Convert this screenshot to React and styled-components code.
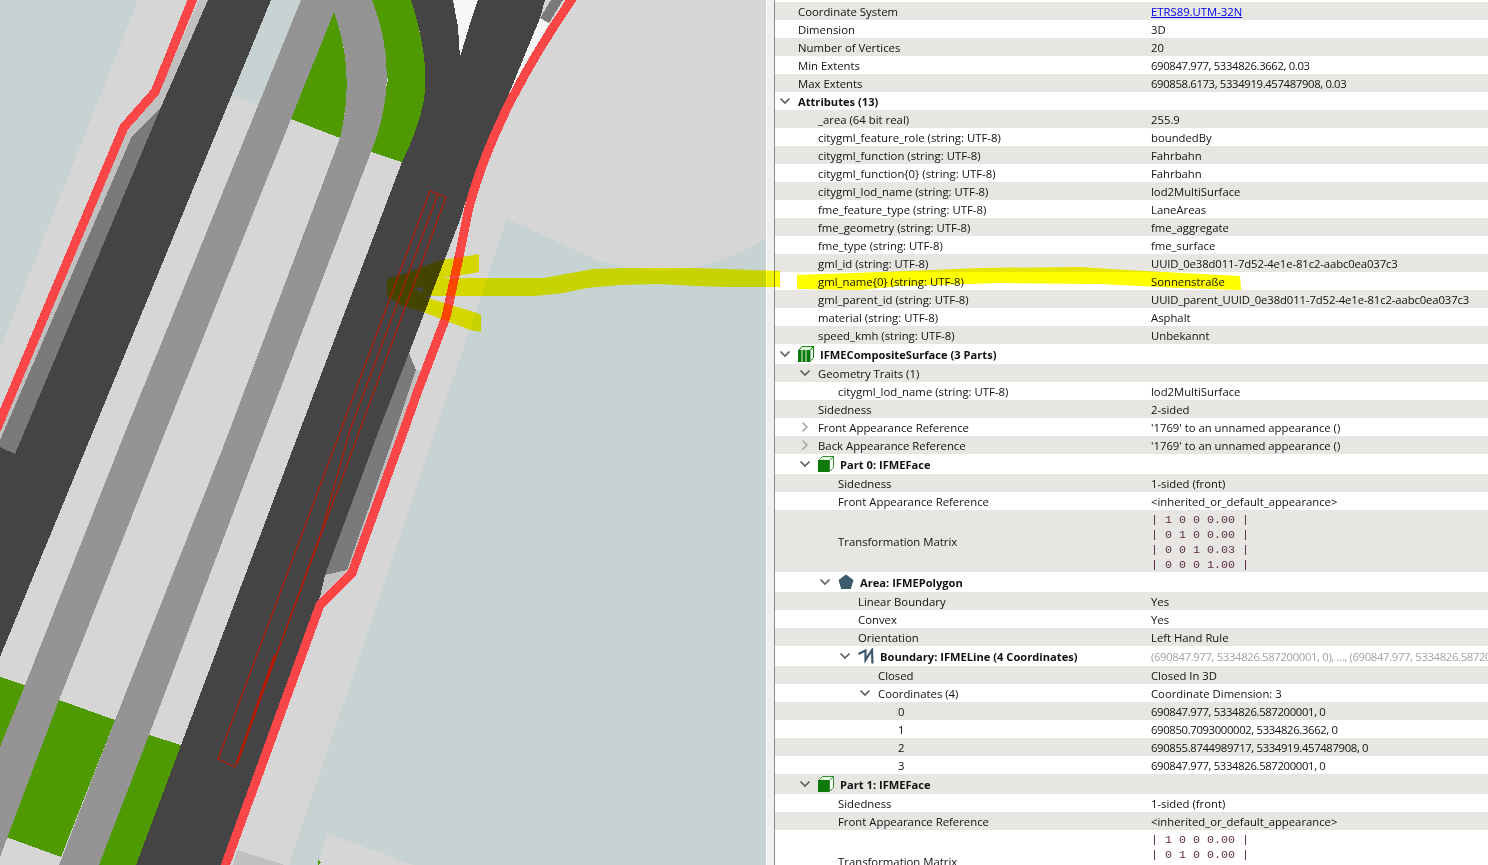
import React from 'react';
import styled, { createGlobalStyle } from 'styled-components';

const GlobalStyle = createGlobalStyle`
    html, body {
        margin: 0;
        padding: 0;
        height: 100%;
        overflow: hidden;
        background: #fff;
    }
`;

const Page = styled.div`
    position: relative;
    display: flex;
    width: 1488px;
    height: 865px;
    overflow: hidden;
`;

const MapPane = styled.div`
    flex: none;
    width: 766px;
    height: 865px;
    background: #d6d6d6;
`;

const MapSvg = styled.svg`
    display: block;
`;

const Splitter = styled.div`
    flex: none;
    width: 7px;
    background: #f0f0f0;
    border-left: 1px solid #fff;
`;

const TreePanel = styled.div`
    flex: 1;
    min-width: 0;
    padding-top: 2px;
    border-left: 1px solid #8a8a96;
    background: #fff;
    font-family: "Open Sans", "Noto Sans", sans-serif;
    font-size: 11.35px;
    color: #111;
`;

const Row = styled.div`
    display: grid;
    grid-template-columns: 376px 1fr;
    align-items: center;
    height: ${(p) => (p.$matrix ? 62 : p.$icon ? 20 : 18)}px;
    background: #fff;
    white-space: nowrap;

    &:nth-child(odd) {
        background: #e7e6e2;
    }
`;

const NameCell = styled.div`
    display: flex;
    align-items: center;
    min-width: 0;
    padding-left: ${(p) => p.$level * 20}px;
    font-weight: ${(p) => (p.$bold ? 700 : 400)};
    font-size: ${(p) => (p.$bold ? '11.15px' : 'inherit')};
`;

const Twisty = styled.span`
    flex: none;
    display: flex;
    align-items: center;
    justify-content: center;
    width: 20px;
    height: 16px;
`;

const NodeIcon = styled.span`
    flex: none;
    display: flex;
    width: 16px;
    height: 16px;
    margin-left: 3px;
    margin-right: 3px;
`;

const NameText = styled.span`
    padding-left: 3px;
`;

const ValueCell = styled.div`
    min-width: 0;
    overflow: hidden;
    font-size: 11.3px;
    letter-spacing: ${(p) => p.$spacing}px;
    color: ${(p) => (p.$muted ? '#a3a3a3' : 'inherit')};
`;

const Link = styled.a`
    color: #0000ee;
    text-decoration: underline;
`;

const Matrix = styled.div`
    padding-top: 4px;
    font-family: "Liberation Mono", monospace;
    font-size: 11.67px;
    line-height: 15px;
    letter-spacing: 0;
    color: #5d2b46;
    white-space: pre;
`;

const HighlightOverlay = styled.svg`
    position: absolute;
    left: 0;
    top: 0;
    pointer-events: none;
    mix-blend-mode: multiply;
`;

const Chevron = ({ open }) => (
    <svg width="12" height="12" viewBox="0 0 12 12">
        <polyline
            points={open ? '1.5,3.5 6,8 10.5,3.5' : '3.5,1.5 8,6 3.5,10.5'}
            fill="none"
            stroke={open ? '#5f5f5f' : '#a8a8a8'}
            strokeWidth="1.7"
        />
    </svg>
);

const CompositeIcon = () => (
    <svg width="16" height="16" viewBox="0 0 16 16">
        <path d="M0.5 4.5 L4 0.5 H15.5 L12 4.5 Z" fill="#dcefd8" stroke="#0b7a0b" />
        <path d="M12 4.5 L15.5 0.5 V11.5 L12 15.5 Z" fill="#fff" stroke="#0b7a0b" />
        <rect x="0" y="4" width="12" height="12" fill="#0b7a0b" />
        <path d="M4 4V16M8 4V16M4.5 4L8 0.5M8.5 4L12 0.5" stroke="#e4f3e0" strokeWidth="1" />
    </svg>
);

const FaceIcon = () => (
    <svg width="16" height="16" viewBox="0 0 16 16">
        <path d="M0.5 4.5 L4.5 0.5 H15.5 L11.5 4.5 Z" fill="#e6f2e2" stroke="#2f8f2f" />
        <path d="M11.5 4.5 L15.5 0.5 V11.5 L11.5 15.5 Z" fill="#fff" stroke="#2f8f2f" />
        <rect x="0" y="4" width="11" height="12" fill="#0b7a0b" />
    </svg>
);

const PolygonIcon = () => (
    <svg width="16" height="16" viewBox="0 0 16 16">
        <polygon points="8,0.5 15.5,6 12.8,15 3.2,15 0.5,6" fill="#3d5a6c" />
    </svg>
);

const LineIcon = () => (
    <svg width="16" height="16" viewBox="0 0 16 16">
        <polyline
            points="0.5,6 7.5,2.5 7.5,12 14,2 14.5,15.5"
            fill="none"
            stroke="#3d5a6c"
            strokeWidth="2.2"
        />
    </svg>
);

const icons = {
    composite: CompositeIcon,
    face: FaceIcon,
    polygon: PolygonIcon,
    line: LineIcon,
};

const matrix = (lines) => lines.join('\n');

const rows = [
    { name: 'Coordinate System', level: 0, link: 'ETRS89.UTM-32N' },
    { name: 'Dimension', level: 0, value: '3D' },
    { name: 'Number of Vertices', level: 0, value: '20' },
    { name: 'Min Extents', level: 0, value: '690847.977, 5334826.3662, 0.03' },
    { name: 'Max Extents', level: 0, value: '690858.6173, 5334919.457487908, 0.03' },
    { name: 'Attributes (13)', level: 0, open: true, bold: true },
    { name: '_area (64 bit real)', level: 1, value: '255.9' },
    { name: 'citygml_feature_role (string: UTF-8)', level: 1, value: 'boundedBy' },
    { name: 'citygml_function (string: UTF-8)', level: 1, value: 'Fahrbahn' },
    { name: 'citygml_function{0} (string: UTF-8)', level: 1, value: 'Fahrbahn' },
    { name: 'citygml_lod_name (string: UTF-8)', level: 1, value: 'lod2MultiSurface' },
    { name: 'fme_feature_type (string: UTF-8)', level: 1, value: 'LaneAreas' },
    { name: 'fme_geometry (string: UTF-8)', level: 1, value: 'fme_aggregate' },
    { name: 'fme_type (string: UTF-8)', level: 1, value: 'fme_surface' },
    { name: 'gml_id (string: UTF-8)', level: 1, value: 'UUID_0e38d011-7d52-4e1e-81c2-aabc0ea037c3' },
    { name: 'gml_name{0} (string: UTF-8)', level: 1, value: 'Sonnenstraße' },
    { name: 'gml_parent_id (string: UTF-8)', level: 1, value: 'UUID_parent_UUID_0e38d011-7d52-4e1e-81c2-aabc0ea037c3' },
    { name: 'material (string: UTF-8)', level: 1, value: 'Asphalt' },
    { name: 'speed_kmh (string: UTF-8)', level: 1, value: 'Unbekannt' },
    { name: 'IFMECompositeSurface (3 Parts)', level: 0, open: true, bold: true, icon: 'composite' },
    { name: 'Geometry Traits (1)', level: 1, open: true },
    { name: 'citygml_lod_name (string: UTF-8)', level: 2, value: 'lod2MultiSurface' },
    { name: 'Sidedness', level: 1, value: '2-sided' },
    { name: 'Front Appearance Reference', level: 1, closed: true, value: "'1769' to an unnamed appearance ()" },
    { name: 'Back Appearance Reference', level: 1, closed: true, value: "'1769' to an unnamed appearance ()" },
    { name: 'Part 0: IFMEFace', level: 1, open: true, bold: true, icon: 'face' },
    { name: 'Sidedness', level: 2, value: '1-sided (front)' },
    { name: 'Front Appearance Reference', level: 2, value: '<inherited_or_default_appearance>' },
    {
        name: 'Transformation Matrix',
        level: 2,
        matrix: matrix(['| 1 0 0 0.00 |', '| 0 1 0 0.00 |', '| 0 0 1 0.03 |', '| 0 0 0 1.00 |']),
    },
    { name: 'Area: IFMEPolygon', level: 2, open: true, bold: true, icon: 'polygon' },
    { name: 'Linear Boundary', level: 3, value: 'Yes' },
    { name: 'Convex', level: 3, value: 'Yes' },
    { name: 'Orientation', level: 3, value: 'Left Hand Rule' },
    {
        name: 'Boundary: IFMELine (4 Coordinates)',
        level: 3,
        open: true,
        bold: true,
        icon: 'line',
        muted: true,
        value: '(690847.977, 5334826.587200001, 0), ..., (690847.977, 5334826.587200001, 0)',
    },
    { name: 'Closed', level: 4, value: 'Closed In 3D' },
    { name: 'Coordinates (4)', level: 4, open: true, value: 'Coordinate Dimension: 3' },
    { name: '0', level: 5, value: '690847.977, 5334826.587200001, 0' },
    { name: '1', level: 5, value: '690850.7093000002, 5334826.3662, 0' },
    { name: '2', level: 5, value: '690855.8744989717, 5334919.457487908, 0' },
    { name: '3', level: 5, value: '690847.977, 5334826.587200001, 0' },
    { name: 'Part 1: IFMEFace', level: 1, open: true, bold: true, icon: 'face' },
    { name: 'Sidedness', level: 2, value: '1-sided (front)' },
    { name: 'Front Appearance Reference', level: 2, value: '<inherited_or_default_appearance>' },
    {
        name: 'Transformation Matrix',
        level: 2,
        matrix: matrix(['| 1 0 0 0.00 |', '| 0 1 0 0.00 |', '| 0 0 1 0.03 |', '| 0 0 0 1.00 |']),
    },
];

// digits are narrower in the reference's font than in Open Sans
const valueSpacing = (value) => {
    if (!value) return 0;
    if (/^\(?\d{5}/.test(value)) return -0.35;
    if (value.startsWith('UUID')) return -0.11;
    return 0;
};

// map colours
const BG = '#c7d3d3';
const DARK = '#444444';
const MID = '#949494';
const STRIP = '#7a7a7a';
const PALE = '#c0c0c0';
const GREEN = '#4f9a00';
const RED = '#fb4648';
const WHITE = '#f6f6f6';
const OUTLINE = '#b81800';

const shapes = [
    // ground
    [BG, 'M0,0 L138,0 L0,349 Z'],
    [BG, 'M271,0 L301,0 L260,106 L230,95 Z'],
    [BG, 'M507,219 L597,260 Q660,280 713,263 Q745,252 766,238 L766,865 L289,865 Z'],
    ['#d6d6d6', 'M327,833 L413,865 L318,865 Z'],
    [PALE, 'M237,850 L285,865 L233,865 Z'],
    [GREEN, 'M318,860 L321,863 L318,865 Z'],
    // left carriageway and its kerb strips
    [PALE, 'M199,0 L208,0 L161,107 L132,136 L0,450 L0,420 L125,130 L158,95 Z'],
    [STRIP, 'M161,107 L132,136 L0,440 L0,447 L15,454 Z'],
    [DARK, 'M208,0 L271,0 L0,657 L0,447 L15,454 L161,107 Z'],
    // verge
    [GREEN, 'M372,0 L411,0 Q430,60 424,100 Q418,130 402,162 L371,152 L388,80 Z'],
    [GREEN, 'M334,12 Q356,72 340,138 L291,119 Z'],
    [GREEN, 'M0,677 L25,685 L0,747 Z'],
    [GREEN, 'M59,700 L115,720 L61,857 L6,837 Z'],
    [GREEN, 'M149,735 L181,745 L136,865 L99,865 Z'],
    // gravel paths
    [MID, 'M301,0 L334,12 L291,119 L166,430 L59,700 L0,857 L0,747 L25,685 L126,430 Z'],
    [MID, 'M301,0 L372,0 Q402,75 371,152 L257,450 L149,735 L99,865 L59,865 L115,720 L222,450 L340,138 Q356,72 334,12 Z'],
    // right carriageway
    [DARK, 'M411,0 L545,0 L540,18 L497,123 L465,203 L461,217 L409,353 L379,430 L325,575 L320,597 L222,865 L136,865 L181,745 L300,430 L402,162 Q418,130 424,100 Q430,60 411,0 Z'],
    [WHITE, 'M453,0 L478,0 L469,27 L460,57 L458,27 Z'],
    [WHITE, 'M540,18 L549,23 L497,123 Z'],
    [STRIP, 'M545,10 L551,0 L563,0 L549,23 L540,18 Z'],
    [STRIP, 'M409,353 L416,370 L396,430 L347,570 L325,575 L379,430 Z'],
    [PALE, 'M325,575 L347,570 L320,597 Z'],
    [PALE, 'M416,370 L421,372 L352,571 L347,570 L396,430 Z'],
];

const MapView = () => (
    <MapPane>
        <MapSvg width="766" height="865" viewBox="0 0 766 865" shapeRendering="crispEdges">
            {shapes.map(([fill, d], i) => (
                <path key={i} d={d} fill={fill} />
            ))}
            <polyline points="194,-4 155,92 124,127 -8,440" fill="none" stroke={RED} strokeWidth="9" />
            <path
                d="M574,-4 C530,60 490,130 469,207 L467,217 L459,257 L446,317 L417,393 L404,430 L352,573 L320,605 L224,869"
                fill="none"
                stroke={RED}
                strokeWidth="9"
            />
            <g fill="none" stroke={OUTLINE} strokeWidth="1.2" shapeRendering="geometricPrecision">
                <polygon points="430,191 446,197 235,767 218,759" />
                <polyline points="438,194 350,430 322,530 237,763" />
                <polyline points="275,655 237,763" strokeWidth="2.4" />
            </g>
        </MapSvg>
    </MapPane>
);

const highlight =
    'M387,279 L410,272 L440,260 L463,257 L479,254 L479,272 L463,275 L442,278 L543,278 L560,275 L593,269 ' +
    'L623,268 L693,268 L727,269 L780,271 L780,287 L728,287 L697,286 L657,284 L620,285 L587,288 L563,293 ' +
    'L535,296 L430,296 L425,297 L477,313 L481,315 L481,332 L470,330 L423,312 L400,305 L387,296 Z ' +
    'M413,288 L423,287 L423,293 Z ' +
    'M797,275 L880,272 L980,268 L1080,267 L1127,270 L1240,276 L1241,290 L1180,288 L1100,284 L1000,283 ' +
    'L900,286 L860,290 L797,289 Z';

const TreeRow = ({ row }) => {
    const Icon = row.icon && icons[row.icon];
    return (
        <Row $icon={!!row.icon} $matrix={!!row.matrix}>
            <NameCell $level={row.level} $bold={row.bold}>
                <Twisty>{(row.open || row.closed) && <Chevron open={row.open} />}</Twisty>
                {Icon && (
                    <NodeIcon>
                        <Icon />
                    </NodeIcon>
                )}
                <NameText>{row.name}</NameText>
            </NameCell>
            <ValueCell $muted={row.muted} $spacing={valueSpacing(row.value)}>
                {row.link && <Link href="#">{row.link}</Link>}
                {row.matrix ? <Matrix>{row.matrix}</Matrix> : row.value}
            </ValueCell>
        </Row>
    );
};

const App = () => (
    <Page>
        <GlobalStyle />
        <MapView />
        <Splitter />
        <TreePanel>
            {rows.map((row, i) => (
                <TreeRow key={i} row={row} />
            ))}
        </TreePanel>
        <HighlightOverlay width="1488" height="865" viewBox="0 0 1488 865">
            <path d={highlight} fill="#ffff00" fillRule="evenodd" />
        </HighlightOverlay>
    </Page>
);

export default App;
